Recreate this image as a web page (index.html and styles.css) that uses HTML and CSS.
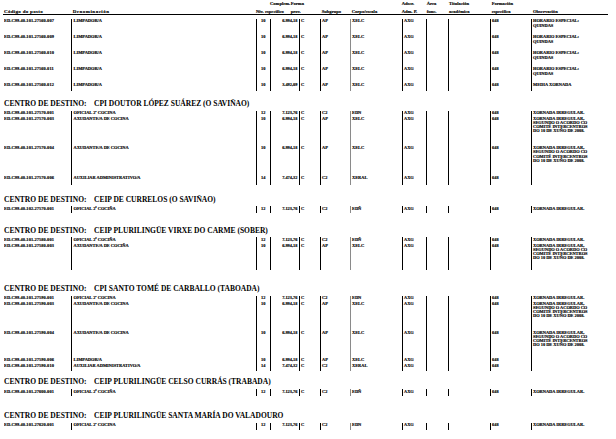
FILE: index.html
```html
<!DOCTYPE html>
<html lang="gl">
<head>
<meta charset="utf-8">
<title>RPT</title>
<link rel="stylesheet" href="styles.css">
</head>
<body>
<div class="page">
  <div class="head">
    <div class="hc low wide1">Código do posto</div>
    <div class="hc low wide2">Denominación</div>
    <div class="hc low">Niv.</div>
    <div class="hc"><span class="ind">Complem.</span><br>específico</div>
    <div class="hc">Forma<br>prov.</div>
    <div class="hc low">Subgrupo</div>
    <div class="hc low">Corpo/escala</div>
    <div class="hc">Adscr.<br>Adm. P.</div>
    <div class="hc">Área<br>func.</div>
    <div class="hc">Titulación<br>académica</div>
    <div class="hc">Formación<br>específica</div>
    <div class="hc low">Observación</div>
  </div>

  <div class="blk b1">
    <div class="row r2"><div class="code">ED.C99.40.101.27560.007</div><div>LIMPADOR/A</div><div class="niv">10</div><div class="comp">6.994,18</div><div>C</div><div>AP</div><div class="corpo">XELC</div><div>AXG</div><div></div><div></div><div>648</div><div>HORARIO ESPECIAL:<br>QUINDAS</div></div>
    <div class="row r2"><div class="code">ED.C99.40.101.27560.009</div><div>LIMPADOR/A</div><div class="niv">10</div><div class="comp">6.994,18</div><div>C</div><div>AP</div><div class="corpo">XELC</div><div>AXG</div><div></div><div></div><div>648</div><div>HORARIO ESPECIAL:<br>QUINDAS</div></div>
    <div class="row r2"><div class="code">ED.C99.40.101.27560.010</div><div>LIMPADOR/A</div><div class="niv">10</div><div class="comp">6.994,18</div><div>C</div><div>AP</div><div class="corpo">XELC</div><div>AXG</div><div></div><div></div><div>648</div><div>HORARIO ESPECIAL:<br>QUINDAS</div></div>
    <div class="row r2"><div class="code">ED.C99.40.101.27560.011</div><div>LIMPADOR/A</div><div class="niv">10</div><div class="comp">6.994,18</div><div>C</div><div>AP</div><div class="corpo">XELC</div><div>AXG</div><div></div><div></div><div>648</div><div>HORARIO ESPECIAL:<br>QUINDAS</div></div>
    <div class="row rl8"><div class="code">ED.C99.40.101.27560.012</div><div>LIMPADOR/A</div><div class="niv">10</div><div class="comp">3.492,09</div><div>C</div><div>AP</div><div class="corpo">XELC</div><div>AXG</div><div></div><div></div><div>648</div><div>MEDIA XORNADA</div></div>
  </div>

  <div class="sec m2"><span class="lbl">CENTRO DE DESTINO:</span>CPI DOUTOR LÓPEZ SUÁREZ (O SAVIÑAO)</div>
  <div class="blk">
    <div class="row r1"><div class="code">ED.C99.40.101.27570.001</div><div>OFICIAL 2ª COCIÑA</div><div class="niv">12</div><div class="comp">7.123,76</div><div>C</div><div>C2</div><div class="corpo">EDÑ</div><div>AXG</div><div></div><div></div><div>648</div><div>XORNADA IRREGULAR.</div></div>
    <div class="row r4b"><div class="code">ED.C99.40.101.27570.003</div><div>AXUDANTE/A DE COCIÑA</div><div class="niv">10</div><div class="comp">6.994,18</div><div>C</div><div>AP</div><div class="corpo">XELC</div><div>AXG</div><div></div><div></div><div>648</div><div>XORNADA IRREGULAR,<br>SEGUNDO O ACORDO CO<br>COMITÉ INTERCENTROS<br>DO 10 DE XUÑO DE 2008.</div></div>
    <div class="row r4b"><div class="code">ED.C99.40.101.27570.004</div><div>AXUDANTE/A DE COCIÑA</div><div class="niv">10</div><div class="comp">6.994,18</div><div>C</div><div>AP</div><div class="corpo">XELC</div><div>AXG</div><div></div><div></div><div>648</div><div>XORNADA IRREGULAR,<br>SEGUNDO O ACORDO CO<br>COMITÉ INTERCENTROS<br>DO 10 DE XUÑO DE 2008.</div></div>
    <div class="row rl10"><div class="code">ED.C99.40.101.27570.006</div><div>AUXILIAR ADMINISTRATIVO/A</div><div class="niv">14</div><div class="comp">7.474,32</div><div>C</div><div>C2</div><div class="corpo">XERAL</div><div>AXG</div><div></div><div></div><div>648</div><div></div></div>
  </div>

  <div class="sec m3"><span class="lbl">CENTRO DE DESTINO:</span>CEIP DE CURRELOS (O SAVIÑAO)</div>
  <div class="blk">
    <div class="row rl7"><div class="code">ED.C99.40.102.27570.001</div><div>OFICIAL 2ª COCIÑA</div><div class="niv">12</div><div class="comp">7.123,76</div><div>C</div><div>C2</div><div class="corpo">EDÑ</div><div>AXG</div><div></div><div></div><div>648</div><div>XORNADA IRREGULAR.</div></div>
  </div>

  <div class="sec m4"><span class="lbl">CENTRO DE DESTINO:</span>CEIP PLURILINGÜE VIRXE DO CARME (SOBER)</div>
  <div class="blk">
    <div class="row r1"><div class="code">ED.C99.40.101.27580.001</div><div>OFICIAL 2ª COCIÑA</div><div class="niv">12</div><div class="comp">7.123,76</div><div>C</div><div>C2</div><div class="corpo">EDÑ</div><div>AXG</div><div></div><div></div><div>648</div><div>XORNADA IRREGULAR.</div></div>
    <div class="row r4"><div class="code">ED.C99.40.101.27580.003</div><div>AXUDANTE/A DE COCIÑA</div><div class="niv">10</div><div class="comp">6.994,18</div><div>C</div><div>AP</div><div class="corpo">XELC</div><div>AXG</div><div></div><div></div><div>648</div><div>XORNADA IRREGULAR,<br>SEGUNDO O ACORDO CO<br>COMITÉ INTERCENTROS<br>DO 10 DE XUÑO DE 2008.</div></div>
  </div>

  <div class="sec m5"><span class="lbl">CENTRO DE DESTINO:</span>CPI SANTO TOMÉ DE CARBALLO (TABOADA)</div>
  <div class="blk">
    <div class="row r1"><div class="code">ED.C99.40.101.27590.001</div><div>OFICIAL 2ª COCIÑA</div><div class="niv">12</div><div class="comp">7.123,76</div><div>C</div><div>C2</div><div class="corpo">EDÑ</div><div>AXG</div><div></div><div></div><div>648</div><div>XORNADA IRREGULAR.</div></div>
    <div class="row r4c"><div class="code">ED.C99.40.101.27590.003</div><div>AXUDANTE/A DE COCIÑA</div><div class="niv">10</div><div class="comp">6.994,18</div><div>C</div><div>AP</div><div class="corpo">XELC</div><div>AXG</div><div></div><div></div><div>648</div><div>XORNADA IRREGULAR,<br>SEGUNDO O ACORDO CO<br>COMITÉ INTERCENTROS<br>DO 10 DE XUÑO DE 2008.</div></div>
    <div class="row r4"><div class="code">ED.C99.40.101.27590.004</div><div>AXUDANTE/A DE COCIÑA</div><div class="niv">10</div><div class="comp">6.994,18</div><div>C</div><div>AP</div><div class="corpo">XELC</div><div>AXG</div><div></div><div></div><div>648</div><div>XORNADA IRREGULAR,<br>SEGUNDO O ACORDO CO<br>COMITÉ INTERCENTROS<br>DO 10 DE XUÑO DE 2008.</div></div>
    <div class="row r1"><div class="code">ED.C99.40.101.27590.006</div><div>LIMPADOR/A</div><div class="niv">10</div><div class="comp">6.994,18</div><div>C</div><div>AP</div><div class="corpo">XELC</div><div>AXG</div><div></div><div></div><div>648</div><div></div></div>
    <div class="row rl7"><div class="code">ED.C99.40.101.27590.010</div><div>AUXILIAR ADMINISTRATIVO/A</div><div class="niv">14</div><div class="comp">7.474,32</div><div>C</div><div>C2</div><div class="corpo">XERAL</div><div>AXG</div><div></div><div></div><div>648</div><div></div></div>
  </div>

  <div class="sec m6"><span class="lbl">CENTRO DE DESTINO:</span>CEIP PLURILINGÜE CELSO CURRÁS (TRABADA)</div>
  <div class="blk">
    <div class="row rl7"><div class="code">ED.C99.40.101.27600.001</div><div>OFICIAL 2ª COCIÑA</div><div class="niv">12</div><div class="comp">7.123,76</div><div>C</div><div>C2</div><div class="corpo">EDÑ</div><div>AXG</div><div></div><div></div><div>648</div><div>XORNADA IRREGULAR.</div></div>
  </div>

  <div class="sec m7"><span class="lbl">CENTRO DE DESTINO:</span>CEIP PLURILINGÜE SANTA MARÍA DO VALADOURO</div>
  <div class="blk">
    <div class="row rl7"><div class="code">ED.C99.40.101.27620.001</div><div>OFICIAL 2ª COCIÑA</div><div class="niv">12</div><div class="comp">7.123,76</div><div>C</div><div>C2</div><div class="corpo">EDÑ</div><div>AXG</div><div></div><div></div><div>648</div><div>XORNADA IRREGULAR.</div></div>
  </div>
</div>
</body>
</html>
```

FILE: styles.css
```css
* {
  box-sizing: border-box;
  margin: 0;
  padding: 0;
}

html, body {
  background: #fff;
}

body {
  margin: 0;
  color: #000;
  font-family: "Liberation Serif", "Times New Roman", serif;
  font-weight: bold;
}

.page {
  width: 616px;
  height: 439px;
  overflow: hidden;
  padding-left: 4px;
}

/* column header */
.head {
  display: grid;
  grid-template-columns: 68.7px 183.3px 9px 25.7px 31px 30px 50px 25px 22.3px 42.7px 41.3px 1fr;
  width: 605px;
  height: 15.2px;
  margin-left: -1px;
  padding-left: 1px;
  border-bottom: 1.2px solid #000;
  font-size: 4.6px;
  line-height: 8.4px;
  white-space: nowrap;
  -webkit-text-stroke: 0.15px #000;
}

.hc.low {
  padding-top: 8.4px;
}

.hc.wide1 {
  font-size: 5px;
  letter-spacing: 0.3px;
}

.hc.wide2 {
  font-size: 5px;
  letter-spacing: 0.5px;
}

.hc .ind {
  margin-left: 5px;
}

/* data rows */
.blk {
  display: flex;
  flex-direction: column;
}

.b1 {
  margin-top: 4px;
}

.row {
  display: grid;
  grid-template-columns: 67px 185px 13.5px 29px 21px 30px 52px 24px 22.5px 41.5px 41px 78px;
  font-size: 4.4px;
  line-height: 4.1px;
  white-space: nowrap;
  -webkit-text-stroke: 0.15px #000;
}

.row > div {
  border-left: 1px solid #000;
  padding: 0.3px 0 0 1.5px;
  overflow: hidden;
}

.row > .code {
  border-left: 0;
  padding-left: 0;
  letter-spacing: 0.1px;
}

.row > .niv {
  text-align: center;
  padding-left: 0;
}

.row > .comp {
  text-align: right;
  padding-right: 1px;
}

.row > .corpo {
  border-left: 1.5px solid #8a8a8a;
}

.r1 { height: 6px; }
.r2 { height: 16px; }
.r4 { height: 27px; }
.r4b { height: 29.5px; }
.r4c { height: 29px; }
.rl7 { height: 6.8px; }
.rl8 { height: 8px; }
.rl10 { height: 9.5px; }

/* section headings */
.sec {
  font-size: 7.5px;
  line-height: 9px;
  height: 9px;
  margin-bottom: 2.8px;
  white-space: nowrap;
}

.sec .lbl {
  display: inline-block;
  width: 90px;
}

.m2 { margin-top: 7.6px; }
.m3 { margin-top: 9.6px; }
.m4 { margin-top: 12.3px; }
.m5 { margin-top: 13.7px; }
.m6 { margin-top: 6.8px; }
.m7 { margin-top: 15.2px; }
```
